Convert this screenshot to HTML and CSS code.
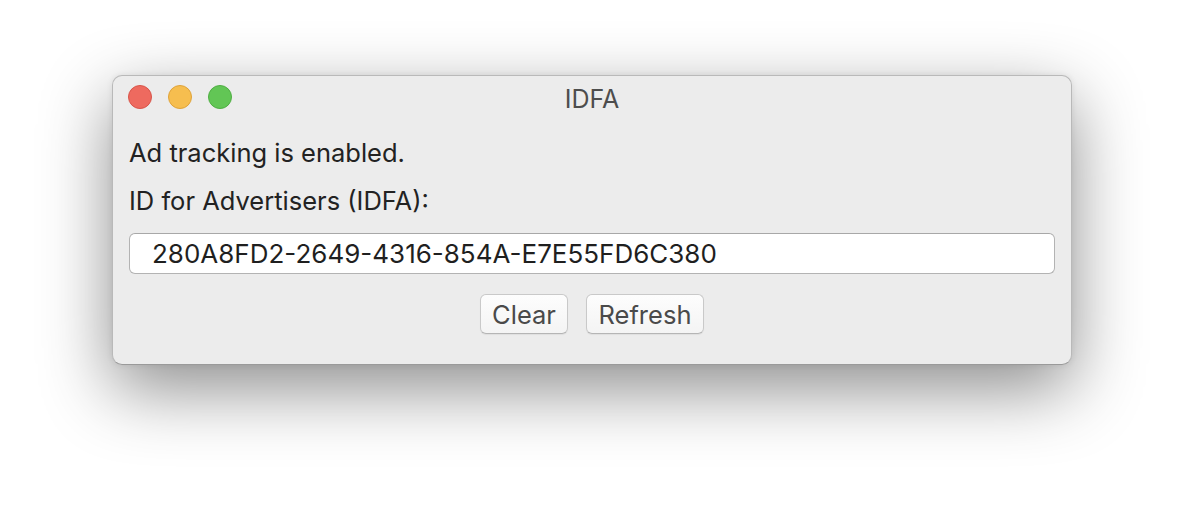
FILE: index.html
```html
<!DOCTYPE html>
<html>
<head>
<meta charset="utf-8">
<link rel="stylesheet" href="styles.css">
</head>
<body>
<div class="window">
  <div class="titlebar">
    <div class="lights">
      <span class="light red"></span>
      <span class="light yellow"></span>
      <span class="light green"></span>
    </div>
    <div class="title">IDFA</div>
  </div>
  <div class="content">
    <div class="label first">Ad tracking is enabled.</div>
    <div class="label second">ID for Advertisers (IDFA):</div>
    <div class="field">280A8FD2-2649-4316-854A-E7E55FD6C380</div>
    <div class="buttons">
      <button class="btn clear">Clear</button>
      <button class="btn refresh">Refresh</button>
    </div>
  </div>
</div>
</body>
</html>
```

FILE: styles.css
```css
html, body {
  margin: 0;
  padding: 0;
  background: #ffffff;
}
body {
  width: 1184px;
  height: 512px;
  overflow: hidden;
  padding: 75px 0 0 112px;
  box-sizing: border-box;
  font-family: "Inter", "Liberation Sans", sans-serif;
  color: #262626;
}
.window {
  width: 960px;
  height: 290px;
  box-sizing: border-box;
  background: #ececec;
  border-radius: 10px;
  border: 1px solid #b9b9b9;
  border-bottom-color: #9a9a9a;
  box-shadow: 0 24px 70px rgba(0, 0, 0, 0.45), 0 0 6px rgba(0,0,0,0.08);
  display: flex;
  flex-direction: column;
}
.titlebar {
  height: 43px;
  position: relative;
  display: flex;
  align-items: center;
  justify-content: center;
}
.lights {
  position: absolute;
  left: 15px;
  top: 9px;
  display: flex;
  gap: 16px;
}
.light {
  width: 24px;
  height: 24px;
  border-radius: 50%;
  box-sizing: border-box;
}
.red { background: #ee6a5f; border: 1px solid #d8554a; }
.yellow { background: #f6be4f; border: 1px solid #dfa33a; }
.green { background: #62c655; border: 1px solid #4fae43; }
.title {
  font-size: 25px;
  color: #4d4d4d;
  padding-top: 3px;
}
.content {
  padding: 0 16px 0 16px;
  display: flex;
  flex-direction: column;
}
.label {
  font-size: 25.5px;
  line-height: 30px;
  color: #222222;
}
.first { margin-top: 19px; }
.second { margin-top: 18px; }
.field {
  margin-top: 17px;
  height: 41px;
  box-sizing: border-box;
  background: #ffffff;
  border: 1px solid #b3b3b3;
  border-top-color: #a8a8a8;
  border-radius: 6px;
  font-size: 26px;
  line-height: 40px;
  padding-left: 22px;
  color: #1f1f1f;
}
.buttons {
  margin-top: 20px;
  display: flex;
  justify-content: center;
  gap: 18px;
}
.btn {
  height: 40px;
  box-sizing: border-box;
  font-family: inherit;
  font-size: 25.5px;
  color: #4a4a4a;
  background: linear-gradient(#fdfdfd, #f4f4f4);
  border: 1px solid #c9c9c9;
  border-bottom-color: #b5b5b5;
  border-radius: 6px;
  padding: 0;
  box-shadow: 0 1px 1px rgba(0,0,0,0.06);
}
.clear { width: 88px; }
.refresh { width: 118px; }
```
